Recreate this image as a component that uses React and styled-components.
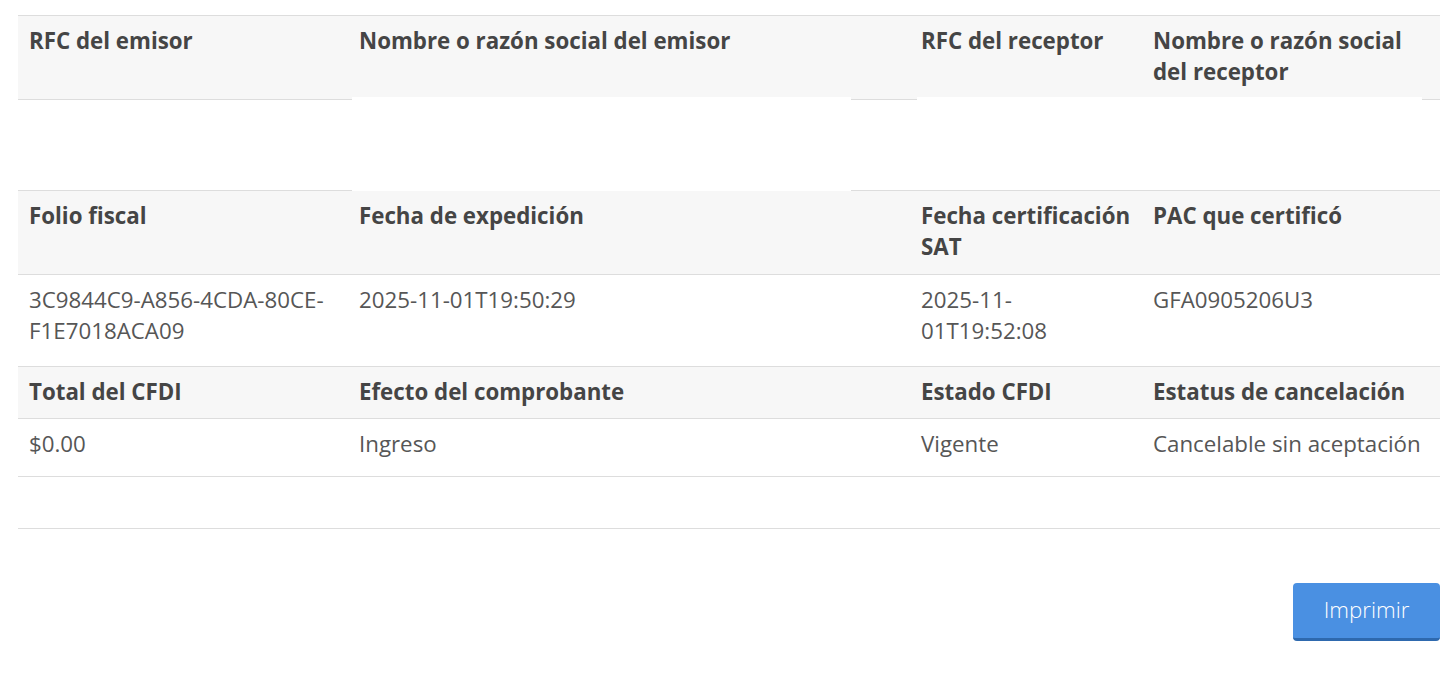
import React from 'react';
import styled, { createGlobalStyle } from 'styled-components';

const GlobalStyle = createGlobalStyle`
  html, body {
    margin: 0;
    padding: 0;
    background: #ffffff;
  }
  body {
    font-family: "Open Sans", "Liberation Sans", Arial, sans-serif;
  }
`;

const Page = styled.div`
  padding: 15px 0 0 18px;
  width: 1440px;
  box-sizing: border-box;
`;

const Table = styled.div`
  border-top: 1px solid #dddddd;
`;

const Row = styled.div`
  display: grid;
  grid-template-columns: 330px 562px 232px 1fr;
  align-items: start;
  background: ${p => (p.$head ? '#f7f7f7' : '#ffffff')};
  border-bottom: ${p => (p.$noBorder ? 'none' : '1px solid #dddddd')};
  height: ${p => p.$height}px;
  box-sizing: border-box;
`;

const HeadCell = styled.div`
  padding: 9px 11px 10px;
  font-size: 22.3px;
  line-height: 31px;
  font-weight: 700;
  color: #454545;
`;

const DataCell = styled.div`
  padding: 9px 11px 10px;
  font-size: 22.3px;
  line-height: 31px;
  font-weight: 400;
  color: #565656;
  word-break: break-word;
`;

const Strip = styled.div`
  display: flex;
  height: ${p => p.$h}px;
`;

const Seg = styled.div`
  flex: ${p => (p.$grow ? '1' : `0 0 ${p.$w}px`)};
  background: ${p => p.$color};
`;

const Gap = styled.div`
  height: 90px;
`;

const Actions = styled.div`
  display: flex;
  justify-content: flex-end;
  padding: 54px 0 30px;
`;

const Button = styled.button`
  width: 147px;
  height: 58px;
  padding: 0 0 2px;
  border: none;
  border-bottom: 3px solid #2e69ae;
  border-radius: 4px;
  background: #4a90e2;
  color: #ffffff;
  font-family: "Open Sans", "Liberation Sans", Arial, sans-serif;
  font-size: 22.3px;
  font-weight: 300;
  cursor: pointer;
`;

const firstHead = ['RFC del emisor', 'Nombre o razón social del emisor', 'RFC del receptor', 'Nombre o razón social del receptor'];

const sections = [
  {
    head: ['Folio fiscal', 'Fecha de expedición', 'Fecha certificación SAT', 'PAC que certificó'],
    data: ['3C9844C9-A856-4CDA-80CE-F1E7018ACA09', '2025-11-01T19:50:29', '2025-11-01T19:52:08', 'GFA0905206U3'],
    headHeight: 84,
    dataHeight: 92,
  },
  {
    head: ['Total del CFDI', 'Efecto del comprobante', 'Estado CFDI', 'Estatus de cancelación'],
    data: ['$0.00', 'Ingreso', 'Vigente', 'Cancelable sin aceptación'],
    headHeight: 52,
    dataHeight: 58,
  },
];

const App = () => {
  return (
    <Page>
      <GlobalStyle />
      <Table>
        <Row $head $noBorder $height={81}>
          {firstHead.map(t => (
            <HeadCell key={t}>{t}</HeadCell>
          ))}
        </Row>
        {/* broken bottom edge of the first header row */}
        <Strip $h={2}>
          <Seg $w={334} $color="#f7f7f7" />
          <Seg $w={499} $color="#ffffff" />
          <Seg $w={66} $color="#f7f7f7" />
          <Seg $w={505} $color="#ffffff" />
          <Seg $grow $color="#f7f7f7" />
        </Strip>
        <Strip $h={1}>
          <Seg $w={334} $color="#dddddd" />
          <Seg $w={499} $color="#ffffff" />
          <Seg $w={66} $color="#dddddd" />
          <Seg $w={505} $color="#ffffff" />
          <Seg $grow $color="#dddddd" />
        </Strip>
        <Gap />
        <Strip $h={1}>
          <Seg $w={334} $color="#dddddd" />
          <Seg $w={499} $color="#ffffff" />
          <Seg $grow $color="#dddddd" />
        </Strip>
        {sections.map(s => (
          <React.Fragment key={s.head[0]}>
            <Row $head $height={s.headHeight}>
              {s.head.map(t => (
                <HeadCell key={t}>{t}</HeadCell>
              ))}
            </Row>
            <Row $height={s.dataHeight}>
              {s.data.map(t => (
                <DataCell key={t}>{t}</DataCell>
              ))}
            </Row>
          </React.Fragment>
        ))}
        <Row $height={52} />
      </Table>
      <Actions>
        <Button>Imprimir</Button>
      </Actions>
    </Page>
  );
};

export default App;
